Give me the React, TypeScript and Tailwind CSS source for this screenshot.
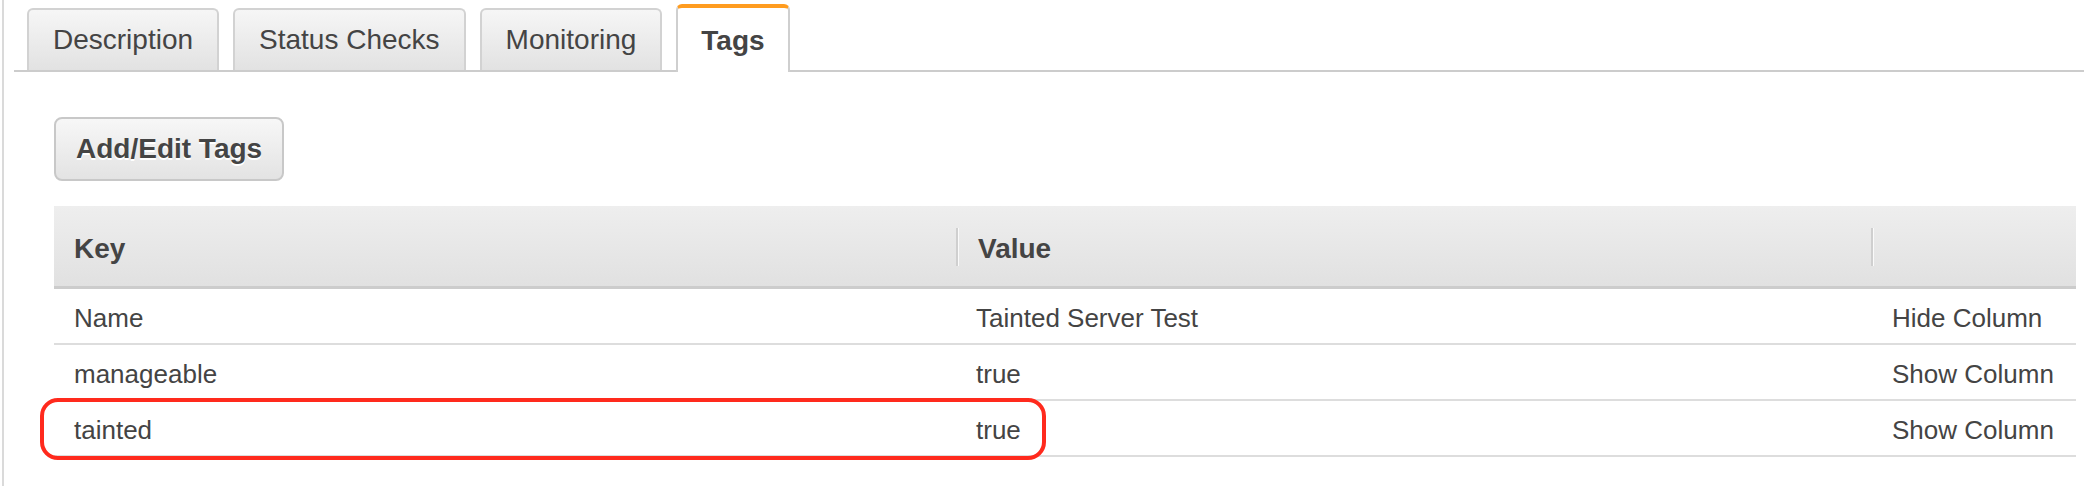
import React from 'react';

const tabs = ['Description', 'Status Checks', 'Monitoring', 'Tags'];

const rows = [
  { key: 'Name', value: 'Tainted Server Test', action: 'Hide Column' },
  { key: 'manageable', value: 'true', action: 'Show Column' },
  { key: 'tainted', value: 'true', action: 'Show Column' },
];

const HeaderDivider = () => (
  <div className="h-[38px] w-[2px] bg-[#cfcfcf] shadow-[1px_0_0_#fafafa] shrink-0" />
);

export default function App() {
  const active = 'Tags';

  return (
    <div className="relative ml-[2px] h-[486px] w-[2082px] overflow-hidden border-l-2 border-[#dadada] bg-white font-['Liberation_Sans',Arial,sans-serif] text-[#444]">
      {/* tab strip */}
      <div className="ml-[10px] flex h-[72px] items-end gap-[14px] border-b-2 border-[#cccccc] pl-[13px]">
        {tabs.map((t) =>
          t === active ? (
            <div
              key={t}
              className="-mb-[2px] flex h-[68px] items-center rounded-t-[6px] border-x-2 border-t-4 border-x-[#cfcfcf] border-t-[#ff9c1f] bg-white px-[23px] pt-[2px] text-[28px] font-bold text-[#444]"
            >
              {t}
            </div>
          ) : (
            <div
              key={t}
              className="flex h-[62px] items-center rounded-t-[6px] border-x-2 border-t-2 border-[#d2d2d2] bg-gradient-to-b from-[#f6f6f6] to-[#e2e2e2] px-[24px] text-[28px] text-[#444]"
            >
              {t}
            </div>
          )
        )}
      </div>

      {/* tab body */}
      <div className="pl-[50px] pr-[8px] pt-[45px]">
        <button className="flex h-[64px] items-center rounded-[8px] border-2 border-[#c8c8c8] bg-gradient-to-b from-[#f7f7f7] to-[#e3e3e3] px-[20px] text-[28px] font-bold text-[#444] [text-shadow:0_2px_0_#fff]">
          Add/Edit Tags
        </button>

        <div className="mt-[25px]">
          <div className="grid h-[83px] grid-cols-[902px_915px_1fr] border-b-[3px] border-[#cccccc] bg-gradient-to-b from-[#eeeeee] to-[#e1e1e1] text-[28px] font-bold">
            <div className="flex items-center pl-[20px] pt-[5px]">Key</div>
            <div className="flex items-center gap-[20px] pt-[2px]">
              <HeaderDivider />
              <span className="pt-[3px]">Value</span>
            </div>
            <div className="flex items-center pt-[2px]">
              <HeaderDivider />
            </div>
          </div>

          {rows.map((r) => (
            <div
              key={r.key}
              className="grid h-[56px] grid-cols-[902px_915px_1fr] border-b-2 border-[#dddddd] text-[26px]"
            >
              <div className="flex items-center pl-[20px] pt-[5px]">{r.key}</div>
              <div className="flex items-center pl-[20px] pt-[5px]">{r.value}</div>
              <div className="flex items-center pl-[21px] pt-[5px]">{r.action}</div>
            </div>
          ))}
        </div>
      </div>

      {/* annotation */}
      <div className="pointer-events-none absolute left-[36px] top-[398px] h-[62px] w-[1006px] rounded-[18px] border-4 border-[#ff2a1d]" />
    </div>
  );
}
